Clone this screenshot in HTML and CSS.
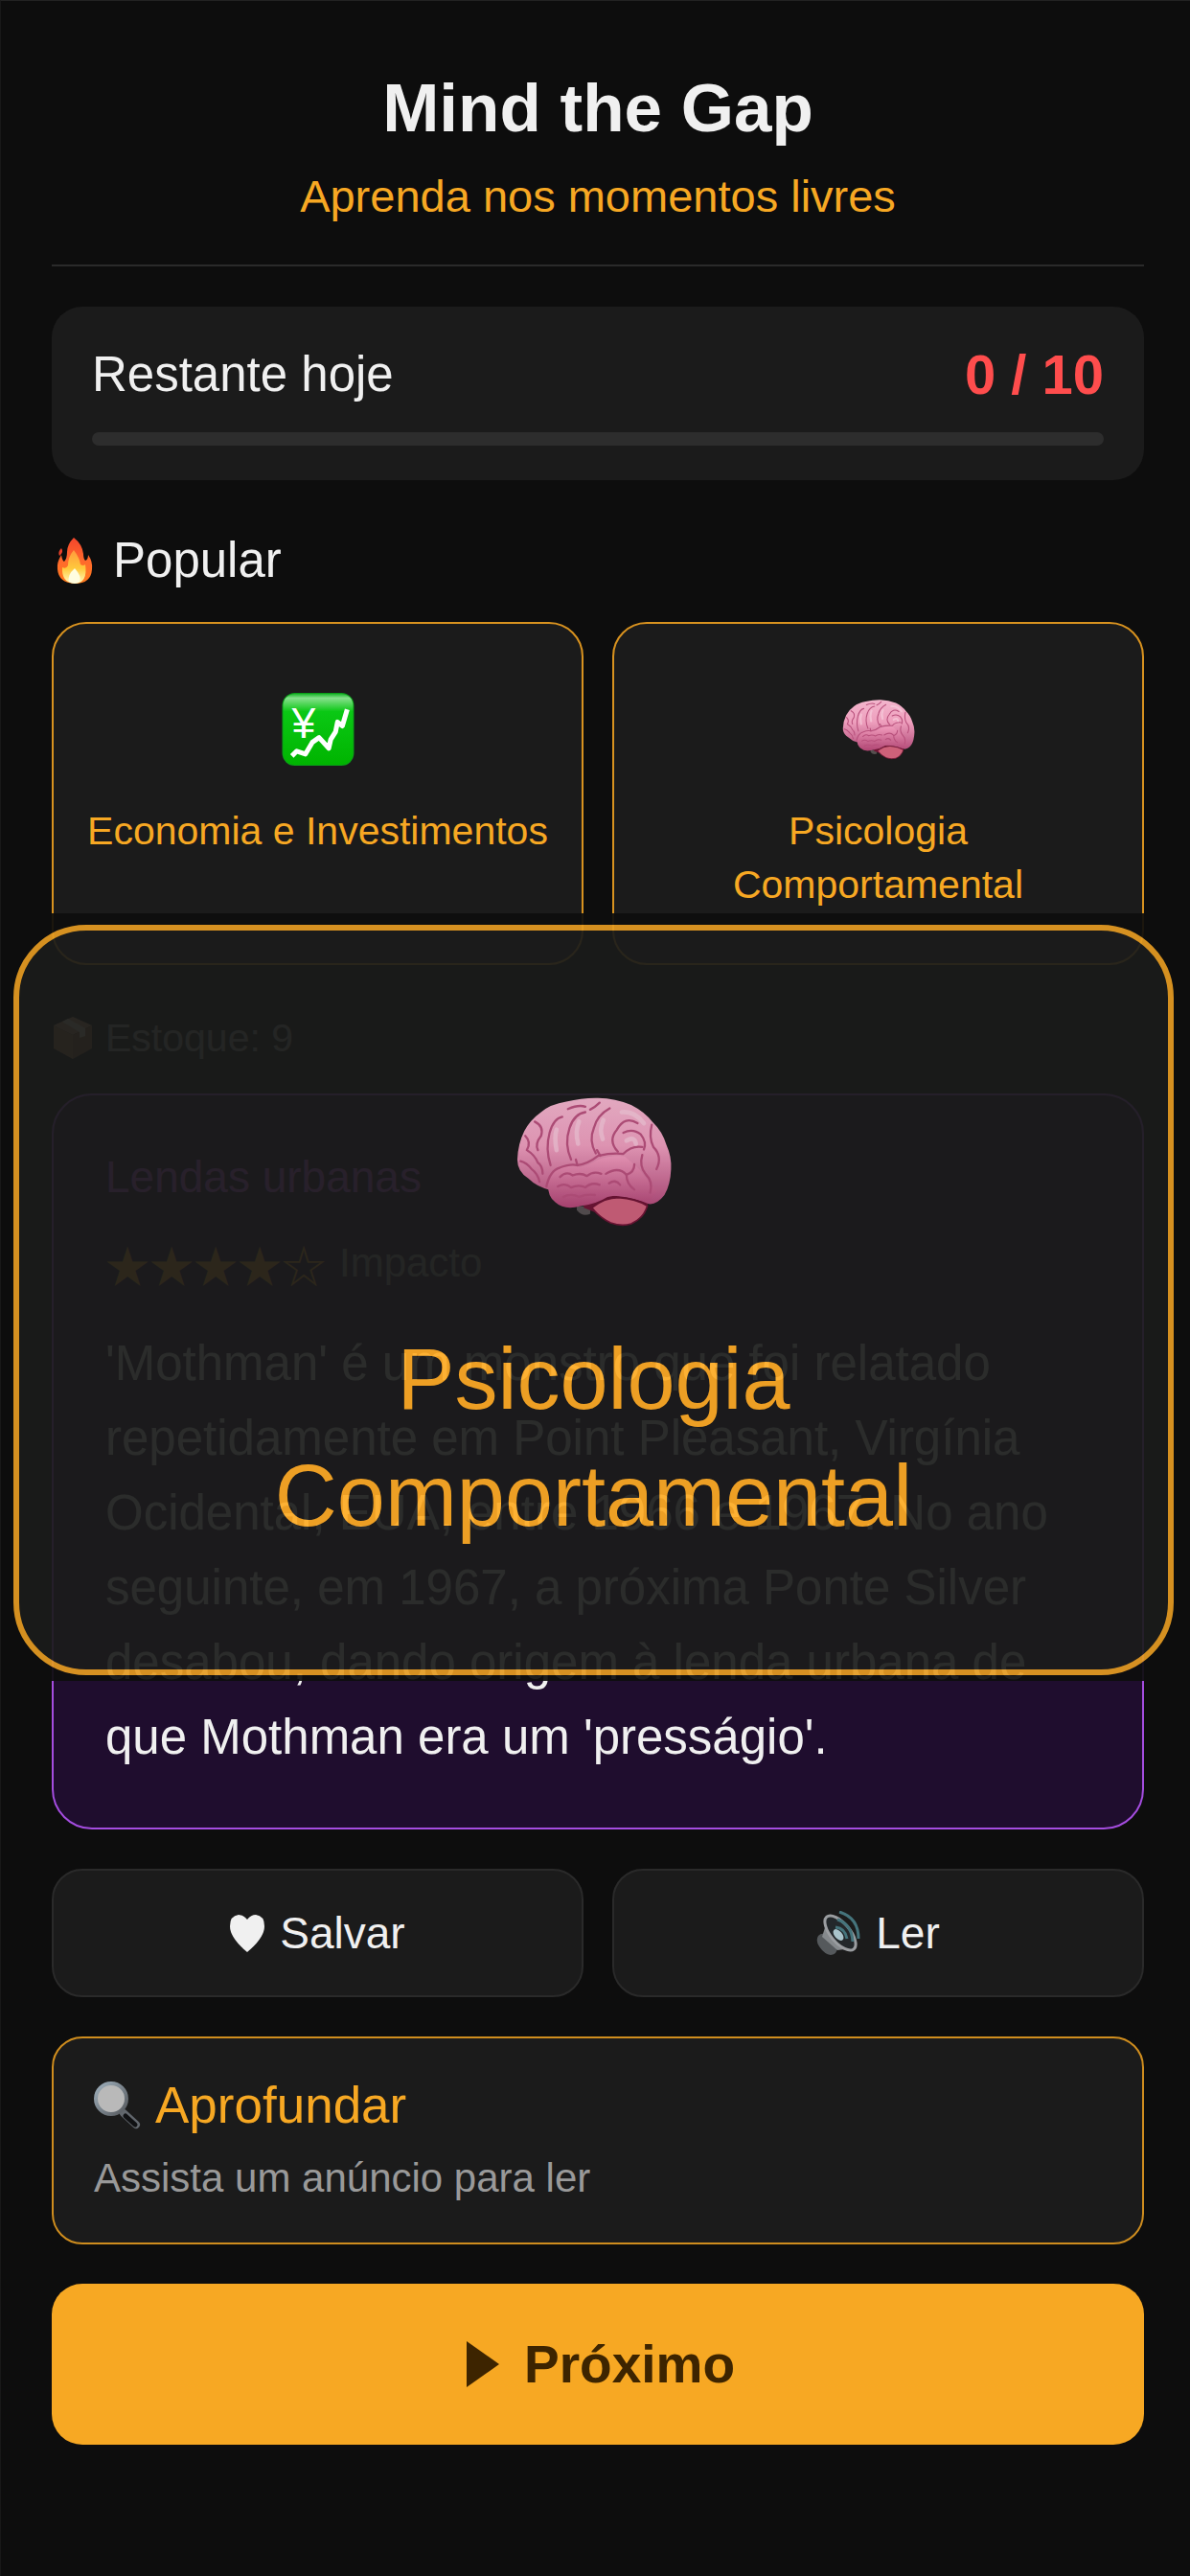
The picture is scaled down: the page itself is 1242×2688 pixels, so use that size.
FILE: index.html
```html
<!DOCTYPE html>
<html lang="pt-BR">
<head>
    <meta charset="UTF-8">
    <meta name="viewport" content="width=device-width, initial-scale=1.0">
    <title>Mind the Gap</title>
    <link rel="stylesheet" href="styles.css">
</head>
<body>
    <!-- Shared icons -->
    <svg class="defs" aria-hidden="true">
        <defs>
            <linearGradient id="brainPink" x1="0" y1="0" x2="0" y2="1">
                <stop offset="0" stop-color="#f3b6cd"/>
                <stop offset="0.45" stop-color="#ee9fbd"/>
                <stop offset="1" stop-color="#b54f7c"/>
            </linearGradient>
            <linearGradient id="lobePink" x1="0" y1="0" x2="0" y2="1">
                <stop offset="0" stop-color="#f09abb"/>
                <stop offset="1" stop-color="#b04573"/>
            </linearGradient>
            <linearGradient id="flameOuter" x1="0" y1="0" x2="0" y2="1">
                <stop offset="0" stop-color="#f4452c"/>
                <stop offset="0.5" stop-color="#ff6a2c"/>
                <stop offset="1" stop-color="#ff7a1c"/>
            </linearGradient>
            <linearGradient id="flameInner" x1="0" y1="0" x2="0" y2="1">
                <stop offset="0" stop-color="#ff9a3c"/>
                <stop offset="0.55" stop-color="#ffc93c"/>
                <stop offset="1" stop-color="#fffbc0"/>
            </linearGradient>
            <linearGradient id="chartGreen" x1="0" y1="0" x2="0" y2="1">
                <stop offset="0" stop-color="#19b52b"/>
                <stop offset="0.06" stop-color="#86e08c"/>
                <stop offset="0.25" stop-color="#0ac814"/>
                <stop offset="1" stop-color="#00b400"/>
            </linearGradient>
            <linearGradient id="metal" x1="0" y1="0" x2="1" y2="1">
                <stop offset="0" stop-color="#9fb0bd"/>
                <stop offset="1" stop-color="#55585c"/>
            </linearGradient>
        </defs>
        <symbol id="brain" viewBox="115 100 495 412">
            <path fill="#55504f" d="M308 448L352 448L350 472Q325 482 308 460Z"/>
            <path fill="#6d1433" d="M330 400H545L530 450L400 480L330 452Z"/>
            <path fill="url(#brainPink)" d="M120 300Q122 250 142 210Q160 175 195 150Q225 125 275 117Q325 104 375 105Q430 106 480 127Q525 150 548 182Q578 210 592 255Q608 290 606 330Q604 380 585 412Q560 444 535 440Q490 420 440 416L300 400L222 396Q180 385 155 360Q120 338 120 300Z"/>
            <path fill="url(#lobePink)" d="M218 380Q220 345 250 328Q285 310 315 324Q350 318 375 300Q420 285 460 290L505 330L560 400Q540 440 505 428Q450 405 405 418Q370 440 320 447Q270 462 240 435Q215 415 218 380Z"/>
            <path fill="#cd6179" stroke="#6d1433" stroke-width="5" d="M356 452Q395 420 440 420Q495 424 531 446Q520 485 480 503Q450 512 415 500Q378 482 356 452Z"/>
            <g fill="none" stroke="#b8517c" stroke-width="7" stroke-linecap="round" stroke-linejoin="round">
                <path d="M212 385Q222 335 255 325Q290 312 310 318Q345 312 375 288Q420 278 455 282Q480 255 515 260"/>
                <path d="M225 318Q208 265 222 215Q235 170 262 165"/>
                <path d="M290 300Q268 250 285 200Q300 155 335 150"/>
                <path d="M368 280Q345 240 362 200Q372 160 412 138"/>
                <path d="M438 275Q405 240 435 205Q460 160 500 185"/>
                <path d="M310 318L305 300M382 288L372 270"/>
                <path d="M455 215Q485 200 510 220Q530 245 520 268"/>
                <path d="M545 190Q535 230 550 260Q580 290 560 330"/>
                <path d="M515 285Q505 320 525 345Q550 370 540 405"/>
                <path d="M400 345Q440 320 465 348Q490 340 490 315"/>
                <path d="M465 348Q465 378 490 395M410 375Q430 360 445 380"/>
                <path d="M145 225Q165 245 150 270Q175 285 185 310Q200 320 200 345"/>
                <path d="M175 180Q205 195 195 225Q175 250 185 270"/>
                <path d="M130 305Q150 310 165 330Q185 345 190 370"/>
                <path d="M255 355Q275 335 295 350Q320 340 340 352Q360 335 385 345"/>
                <path d="M248 385Q270 372 290 388Q315 378 335 388Q355 370 380 380"/>
                <path d="M265 418Q290 405 315 418Q340 408 365 412"/>
                <path d="M280 140Q315 125 335 133M380 120Q365 135 350 142"/>
            </g>
            <g fill="none" stroke="#f6d2e0" stroke-width="14" stroke-linecap="round" opacity="0.6">
                <path d="M244 205Q236 230 244 270M315 180Q302 210 312 250M392 175Q378 205 390 235M450 150Q490 145 520 185M465 240Q490 225 495 250"/>
            </g>
        </symbol>
    </svg>

    <main class="app">
        <header class="header">
            <h1>Mind the Gap</h1>
            <p class="tagline">Aprenda nos momentos livres</p>
        </header>

        <section class="quota">
            <div class="quota-row">
                <span>Restante hoje</span>
                <strong class="quota-count">0 / 10</strong>
            </div>
            <div class="quota-bar"></div>
        </section>

        <h2 class="section-title">
            <svg class="icon-fire" viewBox="0 0 38 50" aria-hidden="true">
                <path fill="url(#flameOuter)" d="M18 1Q27 8 28 18Q28 23 30 25Q33 24 33 19Q38 26 37 34Q36 49 19 49Q2 48 1 34Q0 27 5 19Q6 25 8 26Q11 23 11 16Q11 8 18 1Z"/>
                <path fill="#e8402a" d="M3 20Q1 16 5 12Q8 16 3 20Z"/>
                <path fill="url(#flameInner)" d="M18 14Q24 22 25 29Q28 31 30 29Q33 48 19 49Q5 48 6 32Q10 34 12 30Q12 21 18 14Z"/>
                <path fill="#fffde0" d="M19 33Q27 42 24 47Q19 50 13 47Q11 40 19 33Z"/>
            </svg>
            Popular
        </h2>
        <div class="categories">
            <button type="button" class="category">
                <svg class="icon-category" viewBox="0 0 74 75" aria-hidden="true">
                    <rect width="74" height="75" rx="13" fill="#0a9f18"/>
                    <rect x="1" y="1" width="72" height="73" rx="12" fill="url(#chartGreen)"/>
                    <text class="yen" x="22" y="46" text-anchor="middle">¥</text>
                    <path fill="none" stroke="#fff" stroke-width="5" stroke-linejoin="round" d="M10 65L15 60L24 63L31 51L38 46L48 57L50 48L55 40L57 30L62 34L67 17"/>
                </svg>
                Economia e Investimentos
            </button>
            <button type="button" class="category">
                <svg class="icon-category" aria-hidden="true"><use href="#brain"/></svg>
                Psicologia Comportamental
            </button>
        </div>

        <p class="stock">
            <svg class="icon-box" viewBox="0 0 40 44" aria-hidden="true">
                <path fill="#c99a6c" d="M20 0L40 9L20 19L0 9Z"/>
                <path fill="#b07c4c" d="M0 9L20 19V44L0 33Z"/>
                <path fill="#96653a" d="M40 9L20 19V44L40 33Z"/>
                <path fill="#e3d2ba" d="M9 5L15 2L33 12V20L27 22V16Z"/>
            </svg>
            Estoque: 9
        </p>

        <article class="fact">
            <h3>Lendas urbanas</h3>
            <p class="rating"><span class="stars">★★★★☆</span> Impacto</p>
            <p class="fact-text">'Mothman' é um monstro que foi relatado repetidamente em Point Pleasant, Virgínia Ocidental, EUA, entre 1966 e 1967. No ano seguinte, em 1967, a próxima Ponte Silver desabou, dando origem à lenda urbana de que Mothman era um 'presságio'.</p>
        </article>

        <div class="actions">
            <button type="button" class="action">
                <svg class="icon-heart" viewBox="0 0 36 39" aria-hidden="true">
                    <path fill="#f0f0f0" d="M18 5Q14 0 9 0Q0 1 0 12Q0 24 18 39Q36 24 36 12Q36 1 27 0Q22 0 18 5Z"/>
                </svg>
                Salvar
            </button>
            <button type="button" class="action">
                <svg class="icon-speaker" viewBox="0 0 46 46" aria-hidden="true">
                    <path fill="#55595c" d="M2 26Q6 22 10 25L22 38Q22 45 15 46Q8 45 3 37Q-1 31 2 26Z"/>
                    <path fill="#85898c" d="M6 27L11 11L37 39L22 41Z"/>
                    <ellipse cx="25" cy="23" rx="10" ry="22" transform="rotate(-40 25 23)" fill="#23282b" stroke="#9a9da0" stroke-width="3"/>
                    <ellipse cx="23" cy="25" rx="4" ry="7" transform="rotate(-40 23 25)" fill="#a9c4cb"/>
                    <path fill="none" stroke="#45747c" stroke-width="3" d="M22 9Q37 14 38 32M24 1Q44 7 44 29M20 17Q30 18 32 29"/>
                </svg>
                Ler
            </button>
        </div>

        <button type="button" class="deep-dive">
            <span class="deep-title">
                <svg class="icon-search" viewBox="0 0 50 50" aria-hidden="true">
                    <path stroke="#62676d" stroke-width="8" stroke-linecap="round" d="M31 33L44 45"/>
                    <path stroke="#101113" stroke-width="5" stroke-linecap="round" d="M33 36L43 45"/>
                    <circle cx="18" cy="18" r="16" fill="#b9b9b9" stroke="url(#metal)" stroke-width="4"/>
                </svg>
                Aprofundar
            </span>
            <span class="deep-note">Assista um anúncio para ler</span>
        </button>

        <button type="button" class="next">
            <svg class="icon-play" viewBox="0 0 34 48" aria-hidden="true">
                <path fill="#3d2400" d="M0 0L34 24L0 48Z"/>
            </svg>
            Próximo
        </button>

        <!-- Category zoomed over the page -->
        <div class="spotlight">
            <div class="spotlight-card">
                <svg class="icon-spotlight" aria-hidden="true"><use href="#brain"/></svg>
                <p>Psicologia<br>Comportamental</p>
            </div>
        </div>
    </main>
</body>
</html>
```
FILE: styles.css
```css
* {
    box-sizing: border-box;
    margin: 0;
    padding: 0;
}
body {
    background-color: #0d0d0d;
    color: #f0f0f0;
    font-family: "Liberation Sans", Arial, sans-serif;
    font-size: 51px;
    line-height: 60px;
}
button {
    font-family: inherit;
    color: inherit;
    cursor: pointer;
}
svg {
    flex: none;
}
.defs {
    position: absolute;
    width: 0;
    height: 0;
}
.app {
    position: relative;
    display: flex;
    flex-direction: column;
    min-height: 100vh;
    padding: 70px 48px 60px 53px;
    border-top: 1px solid #222;
    border-left: 1px solid #181818;
}

/* Header */
.header {
    padding-bottom: 41px;
    border-bottom: 2px solid #2a2a2a;
    text-align: center;
}
.header h1 {
    font-size: 71px;
    line-height: 84px;
}
.tagline {
    margin-top: 20px;
    color: #f7a823;
    font-size: 47px;
}

/* Daily quota */
.quota {
    margin-top: 42px;
    padding: 41px 42px 36px;
    border-radius: 32px;
    background-color: #1b1b1b;
}
.quota-row {
    display: flex;
    justify-content: space-between;
}
.quota-count {
    color: #ff4d4d;
    font-size: 58px;
}
.quota-bar {
    height: 14px;
    margin-top: 30px;
    border-radius: 7px;
    background-color: #2d2d2d;
}

/* Categories */
.section-title {
    display: flex;
    align-items: center;
    gap: 21px;
    margin-top: 54px;
    padding-left: 5px;
    font-size: 51px;
    font-weight: normal;
}
.icon-fire {
    width: 38px;
    height: 50px;
}
.categories, .actions {
    display: grid;
    grid-template-columns: 1fr 1fr;
    gap: 30px;
}
.categories {
    margin-top: 34px;
}
.category {
    display: flex;
    flex-direction: column;
    align-items: center;
    gap: 40px;
    padding: 72px 28px 54px;
    border: 2px solid #d8921f;
    border-radius: 36px;
    background-color: #1b1b1b;
    color: #f7a823;
    font-size: 41px;
    line-height: 56px;
}
.icon-category {
    width: 76px;
    height: 76px;
}
.yen {
    fill: #fff;
    font-size: 44px;
}

/* Current fact */
.stock {
    display: flex;
    align-items: center;
    gap: 14px;
    margin-top: 46px;
    padding-left: 2px;
    color: #999;
    font-size: 41px;
}
.icon-box {
    width: 40px;
    height: 44px;
}
.fact {
    margin-top: 28px;
    padding: 55px 54px;
    border: 2px solid #a54de0;
    border-radius: 42px;
    background-color: #1f0d2e;
}
.fact h3 {
    color: #c25ae8;
    font-size: 46px;
    font-weight: normal;
}
.rating {
    display: flex;
    align-items: center;
    gap: 14px;
    height: 60px;
    margin-top: 30px;
    color: #999;
    font-size: 42px;
}
.stars {
    color: #f7a823;
    font-family: "Noto Sans CJK JP", sans-serif;
    font-size: 46px;
}
.fact-text {
    margin-top: 36px;
    line-height: 78px;
}

/* Buttons */
.actions {
    margin-top: 41px;
}
.action {
    display: flex;
    align-items: center;
    justify-content: center;
    gap: 16px;
    padding: 35px 20px;
    border: 2px solid #2a2a2a;
    border-radius: 32px;
    background-color: #1b1b1b;
    font-size: 46px;
    line-height: 60px;
}
.icon-heart {
    width: 36px;
    height: 39px;
}
.icon-speaker {
    width: 46px;
    height: 46px;
}
.deep-dive {
    display: flex;
    flex-direction: column;
    gap: 16px;
    margin-top: 41px;
    padding: 40px 42px 37px;
    border: 2px solid #cf8d1e;
    border-radius: 32px;
    background-color: #1b1b1b;
    text-align: left;
    line-height: 60px;
}
.deep-title {
    display: flex;
    align-items: center;
    gap: 14px;
    color: #f7a823;
    font-size: 53px;
}
.icon-search {
    width: 50px;
    height: 50px;
}
.deep-note {
    color: #999;
    font-size: 42px;
}
.next {
    display: flex;
    align-items: center;
    justify-content: center;
    gap: 26px;
    margin-top: 41px;
    padding: 54px 48px 54px 54px;
    border: none;
    border-radius: 32px;
    background-color: #f7a823;
    color: #3d2400;
    font-size: 55px;
    font-weight: bold;
    line-height: 60px;
}
.icon-play {
    width: 34px;
    height: 48px;
}

/* Enlarged category on top of the page */
.spotlight {
    position: absolute;
    top: 952px;
    left: 0;
    right: 0;
    padding: 12px 17px 6px 13px;
    background-color: #0d0d0d;
    opacity: 0.92;
}
.spotlight-card {
    display: flex;
    flex-direction: column;
    align-items: center;
    gap: 98px;
    padding: 173px 40px 120px;
    border: 6px solid #e69c22;
    border-radius: 76px;
    background-color: #1b1c1b;
    color: #ffac24;
    font-size: 90px;
    line-height: 122px;
    text-align: center;
}
.icon-spotlight {
    width: 164px;
    height: 136px;
}
```
